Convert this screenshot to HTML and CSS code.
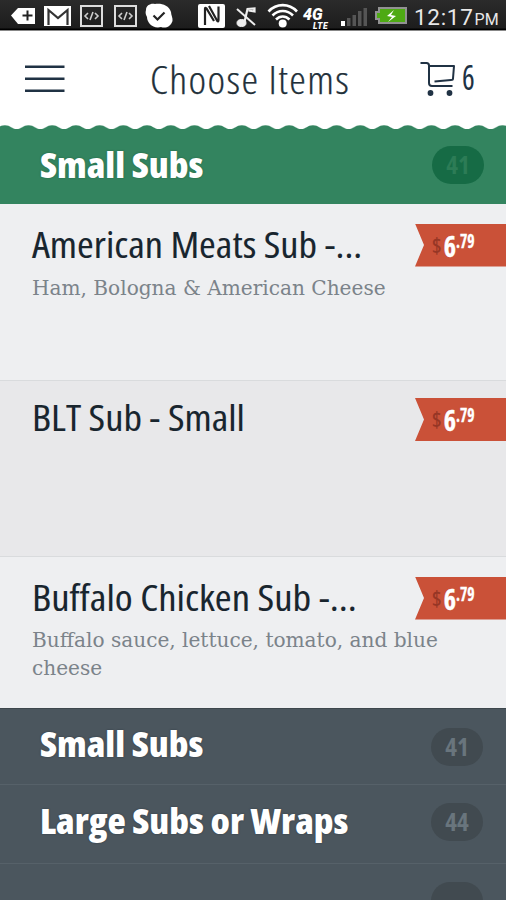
FILE: index.html
```
<!DOCTYPE html>
<html lang="en">
<head>
<meta charset="utf-8">
<title>Choose Items</title>
<link rel="stylesheet" href="styles.css">
</head>
<body>
<div class="status">
  <svg class="status-icons" width="412" height="30" viewBox="0 0 412 30">
    <path d="M11 15.500 18 8h17v16H18z" fill="#fff"/>
    <path d="M22.500 15.500h10M27.500 10.500v10" stroke="#222" stroke-width="2"/>
    <path d="M44 6h27v20H44z" fill="#fff"/>
    <path d="M48.500 25V10l9.500 8 9.500-8v15" fill="none" stroke="#333" stroke-width="2.200"/>
    <g fill="none" stroke="#ddd" stroke-width="2"><path d="M81 6h21v20H81zM115 6h21v20h-21z"/></g>
    <g fill="none" stroke="#ccc" stroke-width="1.600"><path d="m88 13-3 3 3 3m7-6 3 3-3 3m-2-7-3 8M122 13l-3 3 3 3m7-6 3 3-3 3m-2-7-3 8"/></g>
    <path d="M146 10c0-5 5-7 9-6 6-1 14 1 16 8 0 3 2 6 1.500 9-2 6-7 7.500-11.500 6-8 2-14-4-14-10-1-2-2-4-1-7z" fill="#fff"/>
    <path d="m153.500 15.500 4 4 7-7" fill="none" stroke="#222" stroke-width="2.200"/>
    <rect x="198" y="4" width="27" height="24" rx="2" fill="#fff"/>
    <path d="M205 25V8.500q0-1.500 1.500 0L214 21M209 6l8 14.500q1.500 2 1.500-.5V6.500" fill="none" stroke="#222" stroke-width="2.200"/>
    <g stroke="#eee" fill="none"><ellipse cx="241.500" cy="23" rx="4.500" ry="3.500" fill="#eee"/><path d="m244.500 22 3-13 7-.5v3l-6-1" stroke-width="2.200"/><path d="m237 9 18 16" stroke-width="2"/></g>
    <g fill="none" stroke="#fff" stroke-width="2.600"><path d="M268.500 11.500c8-8.500 20.500-8.500 28.500 0M272.500 15.500c6-6 14.500-6 20.500 0M276 19.500c4-4 9.500-4 13.500 0"/></g>
    <circle cx="282.700" cy="23.500" r="4" fill="#fff"/>
    <g class="network"><text x="303" y="19.500" font-size="16">4G</text><text x="313" y="28.500" font-size="8.500" letter-spacing=".6">LTE</text></g>
    <path d="M341 21h4v5h-4z" fill="#fff"/>
    <path d="M347 18h3.500v8H347zM352.500 15h3.500v11h-3.500zM358 11h3.500v15H358zM363.500 8h3.500v18h-3.500z" fill="#555"/>
    <path d="M379 8h27v15h-27v-4h-3v-7h3z" fill="#4eaa13" stroke="#929292" stroke-width="2"/>
    <path d="m394 10-7 6 5 1-4 5 8-6-5-1z" fill="#fff"/>
  </svg>
  <div class="clock">12:17<span class="meridiem">PM</span></div>
</div>

<header class="header">
  <svg width="40" height="30" viewBox="0 0 40 30"><path d="M0 2.800h39.500M0 14.800h39.500M0 26.800h39.500" stroke="#203244" stroke-width="2.400"/></svg>
  <h1 class="title">Choose Items</h1>
  <div class="cart">
    <svg width="36" height="36" viewBox="0 0 36 36" fill="none" stroke="#203244" stroke-width="2">
      <path d="M.5 2h6q2.500 0 2.500 2.500V22q0 3 3 3h20.500M9 5h25L33 17.500q0 1.500-2 1.500L14.500 20.500" stroke-linejoin="round"/>
      <circle cx="10.500" cy="32" r="2.900" fill="#203244" stroke="none"/><circle cx="29.500" cy="32" r="2.900" fill="#203244" stroke="none"/>
    </svg>
    <span class="cart-count">6</span>
  </div>
</header>

<svg class="scallop" width="506" height="4" viewBox="0 0 506 4">
  <defs><pattern id="wave" x="-7" width="23.700" height="4" patternUnits="userSpaceOnUse"><path d="M0 4C5 4 6 .2 11.850.2S18.700 4 23.700 4z" fill="#33845f"/></pattern></defs>
  <rect width="506" height="4" fill="url(#wave)"/>
</svg>
<section class="category category-active"><h2>Small Subs</h2><span class="badge">41</span></section>

<section class="item">
  <h3>American Meats Sub -...</h3>
  <p>Ham, Bologna &amp; American Cheese</p>
  <div class="price"><span class="currency">$</span><span class="whole">6</span><span class="cents">.79</span></div>
</section>
<section class="item item-alt">
  <h3>BLT Sub - Small</h3>
  <div class="price"><span class="currency">$</span><span class="whole">6</span><span class="cents">.79</span></div>
</section>
<section class="item item-last">
  <h3>Buffalo Chicken Sub -...</h3>
  <p>Buffalo sauce, lettuce, tomato, and blue cheese</p>
  <div class="price"><span class="currency">$</span><span class="whole">6</span><span class="cents">.79</span></div>
</section>

<section class="category category-first"><h2>Small Subs</h2><span class="badge">41</span></section>
<section class="category"><h2>Large Subs or Wraps</h2><span class="badge">44</span></section>
<section class="category category-cut"><span class="badge"></span></section>
</body>
</html>
```
FILE: styles.css
```
* { box-sizing: border-box; }
html { height: 900px; overflow: hidden; }
body {
  margin: 0;
  width: 506px;
  height: 900px;
  overflow: hidden;
  background: #fff;
  font-family: "Open Sans", sans-serif;
}
h1, h2, h3, p { margin: 0; white-space: nowrap; }

.status {
  display: flex;
  height: 31px;
  background: linear-gradient(#2b2b2b, #1d1d1d 28px, #000 29px, #000 30px, #888 30px);
}
.status-icons { flex: none; }
.network { fill: #fff; font-family: Roboto, sans-serif; font-weight: 900; font-style: italic; }
.clock {
  padding-left: 2px;
  font: 400 22.500px/34px Roboto, sans-serif;
  letter-spacing: .7px;
  color: #e8e8e8;
  white-space: nowrap;
}
.meridiem { margin-left: 1px; font-size: 16px; letter-spacing: 0; }

.header {
  display: flex;
  align-items: flex-start;
  height: 94px;
  padding: 33px 0 0 25px;
}
.header > svg { flex: none; }
.title {
  width: 200px;
  margin: -11px 0 0 85px;
  font-size: 39px;
  font-weight: 300;
  font-stretch: 75%;
  line-height: 52px;
  letter-spacing: 1.300px;
  transform: scaleX(1.075);
  transform-origin: left;
  -webkit-text-stroke: .25px #22303a;
  color: #22303a;
}
.cart { display: flex; margin: -3px 0 0 70px; }
.cart-count {
  margin: -1px 0 0 6px;
  font-size: 34px;
  font-stretch: 75%;
  line-height: 35px;
  transform: scaleX(.88);
  transform-origin: left;
  color: #203244;
}

.scallop { display: block; }

.category {
  display: flex;
  justify-content: space-between;
  height: 79px;
  padding: 16px 23px 0 40px;
  border-top: 1px solid #566169;
  background: #4b565e;
}
.category h2 {
  font-size: 36px;
  font-weight: 800;
  font-stretch: 75%;
  line-height: 40px;
  transform: scaleX(1.045);
  transform-origin: left;
  color: #fff;
  text-shadow: 0 0 2px rgba(0, 20, 30, .4);
}
.badge {
  width: 52px;
  height: 38px;
  margin-top: 2px;
  border-radius: 19px;
  background: #414a50;
  color: #69757d;
  font-size: 25px;
  font-weight: 700;
  font-stretch: 75%;
  line-height: 37px;
  text-align: center;
}
.category-active { height: 75px; border: 0; background: #33845f; }
.category-active h2 { text-shadow: 0 0 2px rgba(0, 50, 20, .4); }
.category-active .badge { background: #166b45; color: #2c7c56; margin: 1px -1px 0 0; }
.category-first { height: 76px; padding-top: 15px; border-top-color: #3d474c; }
.category-first .badge { margin-top: 4px; }
.category-cut { height: 38px; justify-content: flex-end; }

.item {
  position: relative;
  height: 176px;
  padding: 21px 32px 0;
  background: #eeeff1;
}
.item h3 {
  font-size: 36px;
  font-weight: 400;
  font-stretch: 75%;
  line-height: 40px;
  transform: scaleX(1.122);
  transform-origin: left;
  -webkit-text-stroke: .1px #18252e;
  color: #18252e;
}
.item p {
  margin-top: 9px;
  font: 400 21px/28px "DejaVu Serif", serif;
  font-stretch: 75%;
  transform: scaleX(1.064);
  transform-origin: left;
  color: #7b838a;
  white-space: normal;
}
.item-alt {
  height: 177px;
  padding-top: 17px;
  border: solid #d9dbdd;
  border-width: 1px 0;
  background: #e8e8ea;
}
.item-last { height: 151px; }
.item-last h3 { transform: scaleX(1.13); }
.item-last p { width: 400px; margin-top: 8px; }

.price {
  position: absolute;
  top: 19.500px;
  right: 0;
  display: flex;
  width: 91px;
  height: 43px;
  padding-left: 17px;
  background: #ca5138;
  clip-path: polygon(0 0, 100% 0, 100% 100%, 0 100%, 9px 50%);
  color: #fff;
  font-weight: 700;
  font-stretch: 75%;
  line-height: 43px;
}
.item-alt .price { top: 17px; }
.currency { width: 11px; font-size: 21px; font-weight: 600; color: #963625; }
.whole { width: 13px; font-size: 29px; -webkit-text-stroke: .4px #fff; transform: scaleX(.9); }
.cents { font-size: 19px; line-height: 34px; -webkit-text-stroke: .3px #fff; transform: scaleX(.82); transform-origin: left; }
```
